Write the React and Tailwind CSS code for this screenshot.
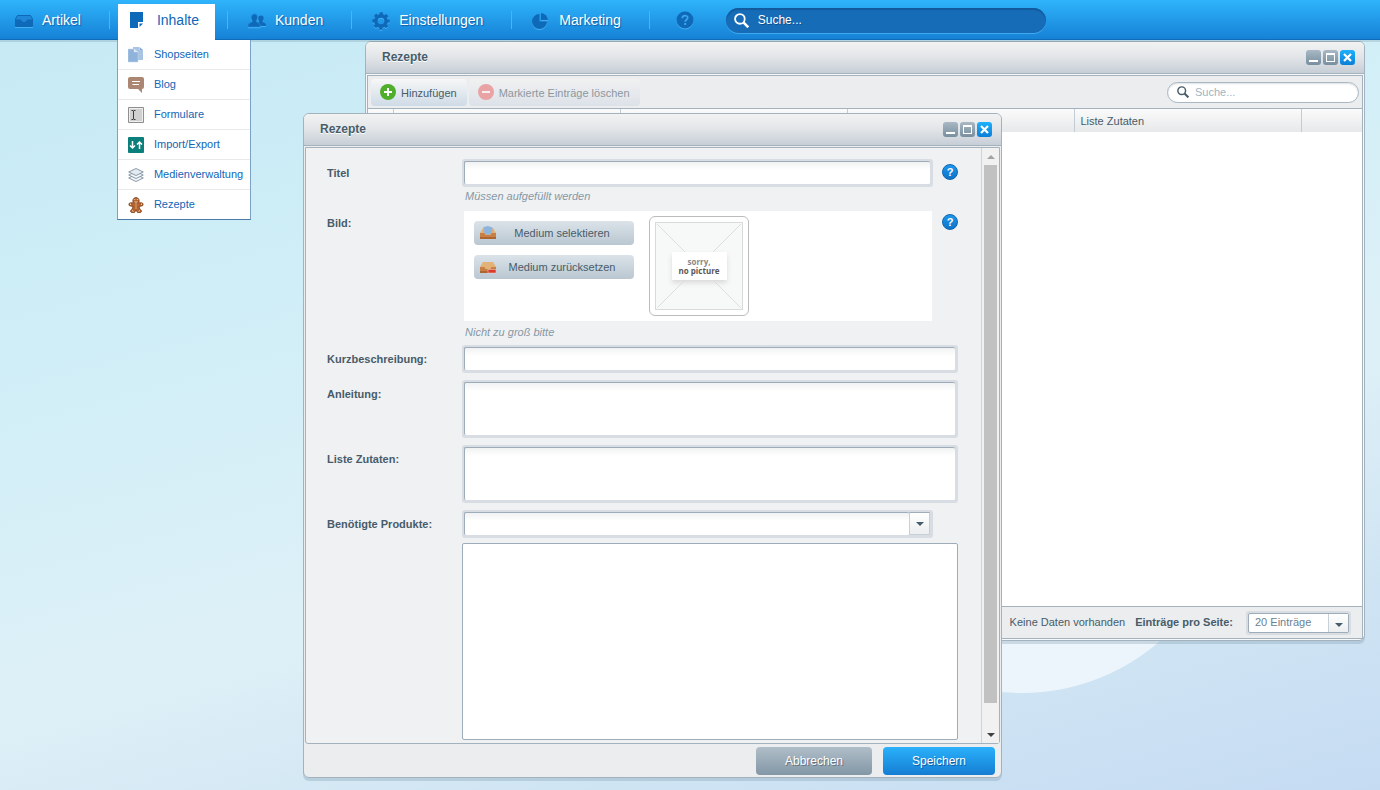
import React from 'react';

const MENU = [
  { label: 'Shopseiten', Icon: PagesIcon },
  { label: 'Blog', Icon: BlogIcon },
  { label: 'Formulare', Icon: FormIcon },
  { label: 'Import/Export', Icon: TransferIcon },
  { label: 'Medienverwaltung', Icon: LayersIcon },
  { label: 'Rezepte', Icon: GingerbreadIcon },
];

const NAV = [
  { label: 'Artikel', Icon: InboxIcon },
  { label: 'Inhalte', Icon: NoteIcon, active: true },
  { label: 'Kunden', Icon: UsersIcon },
  { label: 'Einstellungen', Icon: GearIcon },
  { label: 'Marketing', Icon: PieIcon },
];

/* ---------- icons ---------- */

function InboxIcon() {
  return (
    <svg width="18" height="18" viewBox="0 0 18 18">
      <path d="M2.500 3.500h13l2 3.500v6.500a1 1 0 0 1-1 1h-15a1 1 0 0 1-1-1V7z" fill="#1f86d8" stroke="#0f69b9" />
      <path d="M0 7.500h5c1.500 0 1.500 2.500 4 2.500s2.500-2.500 4-2.500h5V14a1 1 0 0 1-1 1H1a1 1 0 0 1-1-1z" fill="#0f69b9" />
    </svg>
  );
}

function NoteIcon() {
  return (
    <svg width="18" height="18" viewBox="0 0 18 18">
      <path d="M0 1h13v10H8v6H0z" fill="#0f69b9" />
      <path d="M9.500 12.500H13L9.500 16z" fill="#0f69b9" />
    </svg>
  );
}

function UsersIcon() {
  return (
    <svg width="18" height="18" viewBox="0 0 18 18" fill="#0f69b9">
      <path d="M13 3.500c1.800 0 2.800 1.200 2.700 3-.1 1.600-.7 2.300-1.200 3 0 1.200 3.500 1.300 3.500 3.500v1h-5.500c-.3-1.800-1.800-2.400-3-3 1-.4 1.800-.8 1.800-1.500-.6-.8-1.100-1.600-1.100-3 0-1.800 1-3 2.800-3z" />
      <path d="M6.500 2C8.500 2 9.600 3.300 9.500 5.500c-.1 1.700-.6 2.600-1.300 3.400 0 1.900 4 1.700 4 4.400V15H0v-1.700c0-2.700 4.400-2.500 4.400-4.400C3.800 8.100 3.200 7.200 3.200 5.500 3.200 3.300 4.500 2 6.500 2z" stroke="#2592e0" strokeWidth=".6" />
    </svg>
  );
}

function GearIcon() {
  return (
    <svg width="18" height="18" viewBox="0 0 18 18" fill="none" stroke="#0f69b9">
      <circle cx="9" cy="9" r="5.100" strokeWidth="3.600" />
      <circle cx="9" cy="9" r="7.400" strokeWidth="2.600" strokeDasharray="3.200 2.612" strokeDashoffset="1.600" />
    </svg>
  );
}

function PieIcon() {
  return (
    <svg width="18" height="18" viewBox="0 0 18 18" fill="#0f69b9">
      <path d="M7.500 2v7.500H15A7.500 7.500 0 1 1 7.500 2z" />
      <path d="M9 1a7.500 7.500 0 0 1 7 7H9z" />
    </svg>
  );
}

function HelpIcon() {
  return (
    <svg width="18" height="18" viewBox="0 0 18 18" fill="none">
      <circle cx="9" cy="9" r="8.500" fill="#0f69b9" />
      <path d="M6.300 7.200c0-3.600 5.400-3.300 5.400-.4 0 1.900-2.500 1.900-2.500 3.900" stroke="#3aa5ee" strokeWidth="1.800" />
      <path d="M8.200 12h2v2h-2z" fill="#3aa5ee" />
    </svg>
  );
}

function SearchIcon({ className }) {
  return (
    <svg className={className} viewBox="0 0 14 14" fill="none" stroke="currentColor">
      <circle cx="5.500" cy="5.500" r="4.500" strokeWidth="1.700" />
      <path d="M8.800 8.800l4.500 4.500" strokeWidth="2.400" />
    </svg>
  );
}

function PagesIcon() {
  return (
    <svg width="16" height="16" viewBox="0 0 16 16">
      <path d="M5 0h6v3h4v10H5z" fill="#a9c3e2" />
      <path d="M11.500 0L15 3h-3.500z" fill="#7fa9d6" />
      <path d="M0 2h6v3h4v10H0z" fill="#8fb3da" stroke="#c5d8ed" strokeWidth=".5" />
      <path d="M6 1.500L10 5H6z" fill="#dce8f5" />
    </svg>
  );
}

function BlogIcon() {
  return (
    <svg width="16" height="16" viewBox="0 0 16 16">
      <path d="M2 0h12a2 2 0 0 1 2 2v8a2 2 0 0 1-2 2v4l-4-4H2a2 2 0 0 1-2-2V2a2 2 0 0 1 2-2z" fill="#ab8672" />
      <path d="M4 4.500h8M4.500 7.500H11" stroke="#fff" />
    </svg>
  );
}

function FormIcon() {
  return (
    <svg width="16" height="16" viewBox="0 0 16 16" fill="none">
      <path d="M.5.500h15v15H.5z" fill="#d0d0d0" stroke="#8f8f8f" />
      <path d="M1.500 1.500h13v13h-13z" stroke="#efefef" />
      <path d="M3.500 3.500h1.500l.5.500.5-.5h1.500M5.500 4v8M3.500 12.500H5l.5-.5.500.5h1.500" stroke="#3d3d3d" />
    </svg>
  );
}

function TransferIcon() {
  return (
    <svg width="16" height="16" viewBox="0 0 16 16" fill="none">
      <rect width="16" height="16" rx="1" fill="#0b7f79" />
      <path d="M4.500 4v7M2 8.500l2.500 2.500L7 8.500M11.500 12V5M9 7.500L11.500 5 14 7.500" stroke="#fff" strokeWidth="1.500" />
    </svg>
  );
}

function LayersIcon() {
  return (
    <svg width="16" height="16" viewBox="0 0 16 16" stroke="#7d90a1" strokeWidth=".9">
      <path d="M8 7.500l7.300 3.500L8 14.500.7 11z" fill="#f3f6f8" />
      <path d="M8 4.500L15.300 8 8 11.500.7 8z" fill="#f3f6f8" />
      <path d="M8 1.500L15.300 5 8 8.500.7 5z" fill="#e4eaef" />
    </svg>
  );
}

function GingerbreadIcon() {
  return (
    <svg width="16" height="16" viewBox="0 0 16 16" fill="#b5642d" stroke="#7b3c17" strokeWidth=".8">
      <path d="M8 .5a3.300 3.300 0 0 1 2.500 5.300h3a1.500 1.500 0 0 1 0 3.200L11 9.500l.8 2.500 1.500 1.500a1.300 1.300 0 0 1-1 2H9.500L8 13l-1.500 2.500H3.700a1.300 1.300 0 0 1-1-2L4.200 12 5 9.500 2.500 9a1.500 1.500 0 0 1 0-3.200h3A3.300 3.300 0 0 1 8 .5z" />
      <path d="M6.300 2.500h1M8.800 2.500h1M6.500 4.500c1 .8 2 .8 3 0M2.500 6.500v1.500M13.500 6.500v1.500M4 13.500l1.500 1M12 13.500l-1.500 1" stroke="#ffe9cf" fill="none" />
      <path d="M7.500 7h1M7.500 9h1M7.500 11h1" stroke="#fff" />
    </svg>
  );
}

function AddIcon() {
  return (
    <svg width="16" height="16" viewBox="0 0 16 16">
      <circle cx="8" cy="8" r="8" fill="#4fae2c" />
      <path d="M8 4v8M4 8h8" stroke="#fff" strokeWidth="2" />
    </svg>
  );
}

function RemoveIcon() {
  return (
    <svg width="16" height="16" viewBox="0 0 16 16">
      <circle cx="8" cy="8" r="8" fill="#eaa3a5" />
      <path d="M4 8h8" stroke="#f8eef0" strokeWidth="2" />
    </svg>
  );
}

function TrayIcon({ variant }) {
  return (
    <svg width="16" height="14" viewBox="0 0 16 14">
      <path d="M3 2h10l3 5v6H0V7z" fill="#e2b277" />
      <path d="M0 7h4.500l1 2h5l1-2H16v6H0z" fill="#c87f45" />
      <path d="M0 11h16v2H0z" fill="#ad6532" />
      {variant === 'select' ? (
        <path d="M3.500 1L8 0l4.500 1.500-.5 5-2 2H6l-2-2z" fill="#8db4dc" />
      ) : (
        <path d="M8 9.500h8v3.500H8z" fill="#dd3b2a" stroke="#f0d8c8" strokeWidth=".5" />
      )}
    </svg>
  );
}

function Caret({ className }) {
  return (
    <svg className={className} width="8" height="4" viewBox="0 0 8 4" fill="currentColor">
      <path d="M0 0h8L4 4z" />
    </svg>
  );
}

/* ---------- shared pieces ---------- */

function Divider() {
  return <span className="mr-2 ml-3 h-[18px] w-px shrink-0 bg-[#4db3f3]" />;
}

function WindowButtons() {
  return (
    <div className="flex gap-0.5">
      <button type="button" aria-label="Minimieren" className="flex size-[15px] items-end justify-center rounded-[3px] bg-linear-to-b from-[#a9b8c4] to-[#788f9f] pb-[3px]">
        <span className="h-0.5 w-[9px] bg-white" />
      </button>
      <button type="button" aria-label="Maximieren" className="flex size-[15px] items-center justify-center rounded-[3px] bg-linear-to-b from-[#a9b8c4] to-[#788f9f]">
        <span className="h-[9px] w-[9px] border border-t-2 border-white" />
      </button>
      <button type="button" aria-label="Schließen" className="flex size-[15px] items-center justify-center rounded-[3px] bg-linear-to-b from-[#1fb0fb] to-[#0b7fd8]">
        <svg width="9" height="9" viewBox="0 0 9 9" stroke="#fff" strokeWidth="2.200">
          <path d="M1 1l7 7M8 1L1 8" />
        </svg>
      </button>
    </div>
  );
}

function TitleBar({ title }) {
  return (
    <div className="flex h-8 shrink-0 items-center justify-between rounded-t-[5px] border-b border-[#a4b2bd] bg-linear-to-b from-[#f2f2f2] via-[#e2e5e8] to-[#c6ced6] pr-[9px] pb-px pl-4">
      <h2 className="text-[12px] font-bold [text-shadow:0_1px_0_#fff]">{title}</h2>
      <WindowButtons />
    </div>
  );
}

function Row({ label, htmlFor, hint, children }) {
  return (
    <div className={hint ? 'mb-1 flex' : 'mb-[7px] flex'}>
      <label htmlFor={htmlFor} className="w-[135px] shrink-0 text-[11px] leading-7 font-bold">
        {label}
      </label>
      <div className="min-w-0 flex-1">
        {children}
        {hint && <p className="pl-[3px] text-[11px] leading-[18px] text-[#8598a5] italic">{hint}</p>}
      </div>
    </div>
  );
}

function HelpButton() {
  return (
    <button type="button" aria-label="Hilfe" className="mt-[5px] flex size-4 shrink-0 items-center justify-center rounded-full border border-[#0d66b3] bg-linear-to-b from-[#1c96ee] to-[#0f73c8] text-[11px] leading-none font-bold text-white">
      ?
    </button>
  );
}

const frame = 'rounded-[3px] bg-[#d7dde2] pt-0.5 pr-[3px] pb-[3px] pl-0.5';
const field =
  'block w-full resize-none rounded-[2px] border-t border-l border-[#9dacb8] bg-white bg-linear-to-b from-[#f1f2f3] to-white to-[8px] px-1.5 text-[11px] outline-none';

/* ---------- page ---------- */

function Header() {
  return (
    <header className="relative z-30 flex h-10 shrink-0 items-center bg-linear-to-b from-[#2fb4fb] to-[#1680d5] pl-[3px] shadow-[inset_0_-1px_0_#0f6cb8,0_2px_0_rgba(100,140,160,0.25)]">
      <nav className="flex h-full items-center">
        {NAV.map(({ label, Icon, active }) => (
          <React.Fragment key={label}>
            {active ? (
              <div className="relative self-stretch pt-1">
                <a href="#inhalte" className="flex h-full items-center gap-[9px] bg-white pr-4 pb-1 pl-3 text-[14px] text-[#1266b6]">
                  <Icon />
                  {label}
                </a>
                <SubMenu />
              </div>
            ) : (
              <a href={`#${label.toLowerCase()}`} className="flex items-center gap-[9px] pt-px pr-4 pl-3 text-[14px] text-white [text-shadow:1px_1px_1px_#0d5fa8]">
                <span className="drop-shadow-[0_1px_0_#43b0f3]">
                  <Icon />
                </span>
                {label}
              </a>
            )}
            <Divider />
          </React.Fragment>
        ))}
        <button type="button" aria-label="Hilfe" className="ml-[18px] drop-shadow-[0_1px_0_#43b0f3]">
          <HelpIcon />
        </button>
      </nav>
      <label className="ml-8 flex h-[25px] w-80 items-center gap-[9px] rounded-full bg-[#176cb8] px-2 text-white shadow-[inset_0_2px_1px_#115a9c,0_1px_0_#3fa9ef]">
        <SearchIcon className="size-[15px] shrink-0" />
        <input type="text" aria-label="Suche" placeholder="Suche..." className="min-w-0 flex-1 text-[12px] outline-none [text-shadow:1px_1px_0_#0d4f8c] placeholder:text-white" />
      </label>
    </header>
  );
}

function SubMenu() {
  return (
    <ul className="absolute top-full -left-px w-[134px] border-x border-b border-[#7ba3c6] border-b-[#4a7ba6] bg-white">
      {MENU.map(({ label, Icon }) => (
        <li key={label} className="border-b border-[#e7e9eb] last:border-b-0">
          <a href={`#${label.toLowerCase()}`} className="flex h-[29px] items-center gap-2.5 pl-2.5 text-[11px] text-[#1266b6]">
            <Icon />
            {label}
          </a>
        </li>
      ))}
    </ul>
  );
}

function ListWindow() {
  return (
    <section aria-label="Rezepte Liste" className="absolute top-px right-[15px] bottom-[149px] left-[365px] flex flex-col rounded-md border border-[#a4b2bd] bg-[#f7f8f9] shadow-[0_3px_0_rgba(120,150,170,0.3)]">
      <TitleBar title="Rezepte" />
      <div className="mx-px mt-px mb-px flex min-h-0 flex-1 flex-col border border-[#a4b2bd] bg-white">
        <div className="flex h-[33px] shrink-0 items-center gap-0.5 border-b border-[#a4b2bd] bg-[#ebedee] px-[3px] text-[11px]">
          <button type="button" className="flex h-[27px] items-center gap-[5px] rounded-[4px] bg-linear-to-b from-[#f6f7f7] to-[#cfdbe7] pr-2.5 pl-[9px]">
            <AddIcon />
            <span className="pt-0.5">Hinzufügen</span>
          </button>
          <button type="button" disabled className="flex h-[27px] items-center gap-[5px] rounded-[4px] bg-linear-to-b from-[#f0f1f1] to-[#dde2e9] pr-2.5 pl-[9px] text-[#8d979e]">
            <RemoveIcon />
            <span className="pt-0.5">Markierte Einträge löschen</span>
          </button>
          <label className="ml-auto flex h-[21px] w-48 items-center gap-1.5 rounded-full border border-[#a9b7c2] bg-white pr-2 pl-[9px] shadow-[inset_0_1px_2px_#dde1e4]">
            <SearchIcon className="size-3 shrink-0" />
            <input type="text" aria-label="Einträge suchen" placeholder="Suche..." className="min-w-0 flex-1 pt-px outline-none placeholder:text-[#9db4c2]" />
          </label>
        </div>
        <div className="min-h-0 flex-1">
          <table className="w-full table-fixed text-left text-[11px]">
            <thead>
              <tr className="h-[23px] bg-linear-to-b from-[#fbfbfb] to-[#e6e8e9]">
                <th className="w-[25px] border-r border-[#c3ccd4]" />
                <th className="border-r border-[#c3ccd4]" />
                <th className="border-r border-[#c3ccd4]" />
                <th className="border-r border-[#c3ccd4]" />
                <th className="border-r border-[#c3ccd4] pt-0.5 pl-1.5 font-normal">Liste Zutaten</th>
                <th className="w-[61px]" />
              </tr>
            </thead>
            <tbody />
          </table>
        </div>
        <div className="flex h-8 shrink-0 items-center justify-end border-t border-[#a4b2bd] bg-[#ebedee] pr-[11px] text-[11px]">
          <span className="mr-2.5">Keine Daten vorhanden</span>
          <label htmlFor="page-size" className="mr-[13px] font-bold">
            Einträge pro Seite:
          </label>
          <div className="relative w-[105px] rounded-[3px] bg-[#d7dde2] p-0.5">
            <select id="page-size" className="block h-5 w-full appearance-none rounded-[2px] border border-[#9dacb8] bg-white pl-1.5 text-[#688295] outline-none">
              <option>20 Einträge</option>
            </select>
            <span className="pointer-events-none absolute top-[3px] right-[3px] flex h-[18px] w-5 items-center justify-center border-l border-[#c9d1d8] bg-linear-to-b from-white to-[#eceeef] pt-1">
              <Caret />
            </span>
          </div>
        </div>
      </div>
    </section>
  );
}

function MediaField() {
  return (
    <div className="flex">
      <div className="mr-2 flex-1 p-0.5">
        <div className="flex gap-[15px] bg-white px-2.5 py-[5px]">
          <div className="flex w-40 flex-col gap-2.5 pt-[5px] text-[11px]">
            <button type="button" className="flex h-6 items-center rounded-[4px] bg-linear-to-b from-[#dbe3e9] to-[#bac7d1] px-1.5">
              <TrayIcon variant="select" />
              <span className="flex-1 text-center">Medium selektieren</span>
            </button>
            <button type="button" className="flex h-6 items-center rounded-[4px] bg-linear-to-b from-[#dbe3e9] to-[#bac7d1] px-1.5">
              <TrayIcon variant="reset" />
              <span className="flex-1 text-center">Medium zurücksetzen</span>
            </button>
          </div>
          <div className="size-25 rounded-md border border-[#bcbcbc] bg-white p-[5px]">
            <div className="relative flex size-full items-center justify-center border border-[#d9dada] bg-[#f7f9f8]">
              <svg className="absolute inset-0 size-full" viewBox="0 0 86 86" stroke="#dcdedd">
                <path d="M1 1l84 84M85 1L1 85" />
              </svg>
              <p className="relative w-[55px] bg-white py-[5px] text-center font-['Open_Sans',sans-serif] text-[8px] leading-[9px] font-bold text-[#8a8786] shadow-[0_3px_5px_#dadada]">
                sorry,
                <br />
                <span className="text-[#5a5655]">no picture</span>
              </p>
            </div>
          </div>
        </div>
      </div>
      <HelpButton />
    </div>
  );
}

function Scrollbar() {
  return (
    <div className="flex w-[18px] shrink-0 flex-col items-center border-l border-[#ccd3d9] bg-[#f1f1f1]">
      <button type="button" aria-label="Nach oben" className="flex h-[17px] items-center">
        <Caret className="rotate-180 text-[#a3a3a3]" />
      </button>
      <div className="mb-[23px] w-[13px] flex-1 bg-[#c1c1c1]" />
      <button type="button" aria-label="Nach unten" className="flex h-[17px] items-center">
        <Caret className="text-[#404040]" />
      </button>
    </div>
  );
}

function EditWindow() {
  return (
    <section aria-label="Rezepte bearbeiten" className="absolute top-[73px] left-[303px] flex w-[699px] flex-col rounded-md border border-[#a4b2bd] bg-[#ebedee] shadow-[0_3px_0_rgba(120,150,170,0.3)]">
      <TitleBar title="Rezepte" />
      <form>
        <div className="mx-px mt-px flex rounded-b-[3px] border border-[#a4b2bd] bg-[#f0f1f3]">
          <div className="min-w-0 flex-1 pt-[11px] pr-[23px] pb-[3px] pl-[21px]">
            <Row label="Titel" htmlFor="title" hint="Müssen aufgefüllt werden">
              <div className="flex gap-[9px]">
                <div className={`${frame} flex-1`}>
                  <input id="title" type="text" className={`${field} h-[23px]`} />
                </div>
                <HelpButton />
              </div>
            </Row>
            <Row label="Bild:" hint="Nicht zu groß bitte">
              <MediaField />
            </Row>
            <Row label="Kurzbeschreibung:" htmlFor="summary">
              <div className={frame}>
                <input id="summary" type="text" className={`${field} h-[23px]`} />
              </div>
            </Row>
            <Row label="Anleitung:" htmlFor="manual">
              <div className={frame}>
                <textarea id="manual" className={`${field} h-[53px]`} />
              </div>
            </Row>
            <Row label="Liste Zutaten:" htmlFor="ingredients">
              <div className={frame}>
                <textarea id="ingredients" className={`${field} h-[53px]`} />
              </div>
            </Row>
            <div className="flex">
              <label htmlFor="products" className="w-[135px] shrink-0 text-[11px] leading-7 font-bold">
                Benötigte Produkte:
              </label>
              <div className="flex-1">
                <div className={`${frame} mr-[25px] mb-[5px] flex`}>
                  <input id="products" type="text" role="combobox" aria-expanded="false" className={`${field} h-[23px]`} />
                  <button type="button" aria-label="Auswahl öffnen" className="flex h-[23px] w-[21px] shrink-0 items-center justify-center border border-[#c9d1d8] border-t-[#9dacb8] bg-linear-to-b from-white to-[#eceeef]">
                    <Caret />
                  </button>
                </div>
                <div className="h-[197px] rounded-[2px] border border-[#9dacb8] bg-white" />
              </div>
            </div>
          </div>
          <Scrollbar />
        </div>
        <div className="flex justify-end gap-[11px] pt-[3px] pr-1.5 pb-0.5 text-[12px] text-white">
          <button type="button" className="h-7 w-29 rounded-[4px] bg-linear-to-b from-[#b0bec8] to-[#8397a6] [text-shadow:1px_1px_0_#5f7484]">
            Abbrechen
          </button>
          <button type="submit" className="h-7 w-28 rounded-[4px] bg-linear-to-b from-[#2bb1fa] to-[#157dd3] [text-shadow:1px_1px_0_#0d5fa8]">
            Speichern
          </button>
        </div>
      </form>
    </section>
  );
}

export default function App() {
  return (
    <div className="flex min-h-screen flex-col bg-linear-[165deg,#c5e9f4_0%,#cfeef7_30%,#def0f7_62%,#cfe4f3_82%,#c5dbf2_100%] font-['Liberation_Sans',Arial,sans-serif] text-[#475c6a]">
      <Header />
      <main className="relative min-h-[750px] flex-1 overflow-hidden">
        {/* pale disc of the wallpaper */}
        <div className="absolute top-[235px] left-[813px] size-[418px] rounded-full bg-[#ecf5fc]" />
        <ListWindow />
        <EditWindow />
      </main>
    </div>
  );
}
